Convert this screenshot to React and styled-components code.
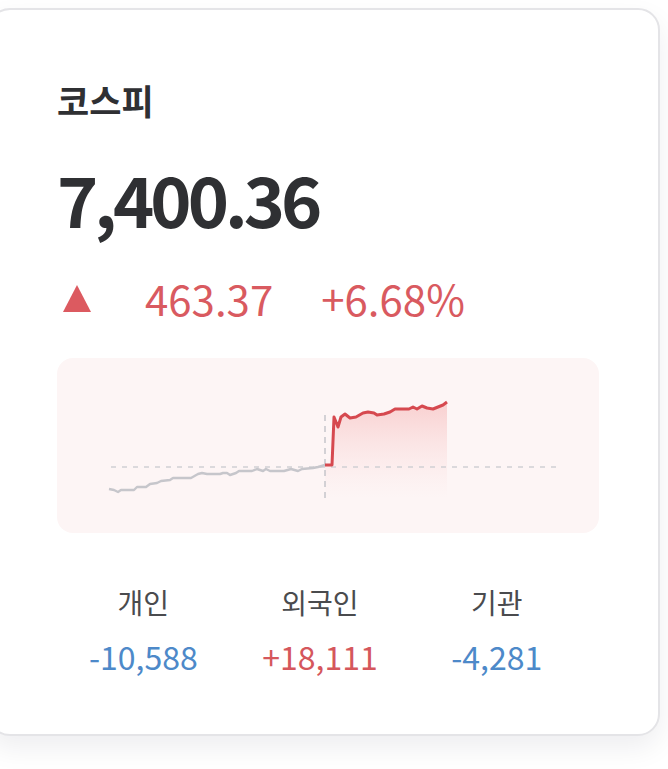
import React from "react";
import styled, { createGlobalStyle } from "styled-components";

const GlobalStyle = createGlobalStyle`
  html, body {
    margin: 0;
    padding: 0;
    background: #ffffff;
  }
  body {
    font-family: "Noto Sans CJK KR", "Noto Sans", sans-serif;
    overflow: hidden;
  }
`;

// 장중 지수 흐름 (차트 박스 픽셀 좌표)
const prevSession = [
  [52, 131], [57, 132], [61, 134], [64, 132], [77, 132], [80, 129], [89, 129],
  [93, 126], [100, 125], [104, 123], [113, 122], [116, 120], [134, 120],
  [141, 116], [145, 115], [150, 116], [163, 116], [166, 115], [170, 115],
  [173, 117], [179, 115], [182, 113], [195, 113], [200, 111], [206, 113],
  [209, 111], [213, 113], [227, 113], [234, 111], [241, 113], [245, 111],
  [256, 110], [261, 109], [268, 107],
];

const todaySession = [
  [268, 107], [275, 107], [277, 59], [281, 69], [284, 59], [288, 56],
  [293, 60], [299, 59], [306, 55], [311, 54], [317, 55], [320, 57],
  [327, 56], [333, 54], [338, 51], [352, 51], [356, 49], [360, 51],
  [365, 48], [370, 50], [376, 51], [381, 49], [386, 47], [390, 44],
];

const investors = [
  { name: "개인", value: "-10,588", up: false },
  { name: "외국인", value: "+18,111", up: true },
  { name: "기관", value: "-4,281", up: false },
];

const toPath = (pts) =>
  pts.map(([x, y], i) => `${i === 0 ? "M" : "L"}${x} ${y}`).join(" ");

const Page = styled.div`
  padding-top: 8px;
  height: 769px;
  box-sizing: border-box;
`;

const Card = styled.div`
  margin-left: -12px;
  width: 672px;
  height: 728px;
  box-sizing: border-box;
  border: 2px solid #e4e4e7;
  border-radius: 22px;
  background: #fff;
  box-shadow: 0 12px 28px rgba(20, 20, 40, 0.07);
  padding: 68px 0 0 67px;
`;

const Title = styled.h2`
  margin: 0;
  font-size: 35px;
  line-height: 44px;
  font-weight: 700;
  color: #2f3033;
`;

const Price = styled.div`
  margin-top: 36px;
  font-size: 70px;
  line-height: 80px;
  font-weight: 700;
  color: #2f3033;
  letter-spacing: -4px;
`;

const ChangeRow = styled.div`
  margin-top: 35px;
  display: flex;
  align-items: center;
  color: #d95a60;
  font-size: 42px;
  line-height: 50px;
  font-weight: 400;
`;

const Arrow = styled.span`
  width: 0;
  height: 0;
  margin-left: 6px;
  border-left: 14px solid transparent;
  border-right: 14px solid transparent;
  border-bottom: 27px solid #dc5a60;
  margin-right: 54px;
`;

const Rate = styled.span`
  margin-left: 48px;
`;

const ChartBox = styled.div`
  margin-top: 35px;
  width: 542px;
  height: 175px;
  border-radius: 16px;
  background: #fdf5f5;
  overflow: hidden;
`;

const Flows = styled.div`
  margin-top: 52px;
  margin-left: -2px;
  width: 530px;
  display: grid;
  grid-template-columns: repeat(3, 1fr);
  text-align: center;
`;

const Flow = styled.div`
  display: flex;
  flex-direction: column;
  gap: 18px;
`;

const FlowName = styled.div`
  font-size: 28px;
  line-height: 34px;
  color: #4a4b4e;
`;

const FlowValue = styled.div`
  font-size: 32px;
  line-height: 38px;
  color: ${(p) => (p.$up ? "#d5575c" : "#4d89c9")};
`;

const Chart = () => (
  <svg width="542" height="175" viewBox="0 0 542 175">
    <defs>
      <linearGradient id="todayFill" x1="0" y1="0" x2="0" y2="1">
        <stop offset="0%" stopColor="#f08a8a" stopOpacity="0.35" />
        <stop offset="100%" stopColor="#f7c4c4" stopOpacity="0" />
      </linearGradient>
    </defs>
    <path
      d={`${toPath(todaySession)} L390 140 L268 140 Z`}
      fill="url(#todayFill)"
    />
    <line x1="54" y1="109" x2="501" y2="109" stroke="#cfcfd4" strokeWidth="1.5" strokeDasharray="5 6" />
    <line x1="268" y1="57" x2="268" y2="140" stroke="#c4c4ca" strokeWidth="1.5" strokeDasharray="6 5" />
    <path d={toPath(prevSession)} fill="none" stroke="#c6c6cb" strokeWidth="2.4" strokeLinejoin="round" />
    <path d={toPath(todaySession)} fill="none" stroke="#d6494f" strokeWidth="3" strokeLinejoin="round" />
  </svg>
);

export default function App() {
  return (
    <Page>
      <GlobalStyle />
      <Card>
        <Title>코스피</Title>
        <Price>7,400.36</Price>
        <ChangeRow>
          <Arrow />
          <span>463.37</span>
          <Rate>+6.68%</Rate>
        </ChangeRow>
        <ChartBox>
          <Chart />
        </ChartBox>
        <Flows>
          {investors.map((inv) => (
            <Flow key={inv.name}>
              <FlowName>{inv.name}</FlowName>
              <FlowValue $up={inv.up}>{inv.value}</FlowValue>
            </Flow>
          ))}
        </Flows>
      </Card>
    </Page>
  );
}
